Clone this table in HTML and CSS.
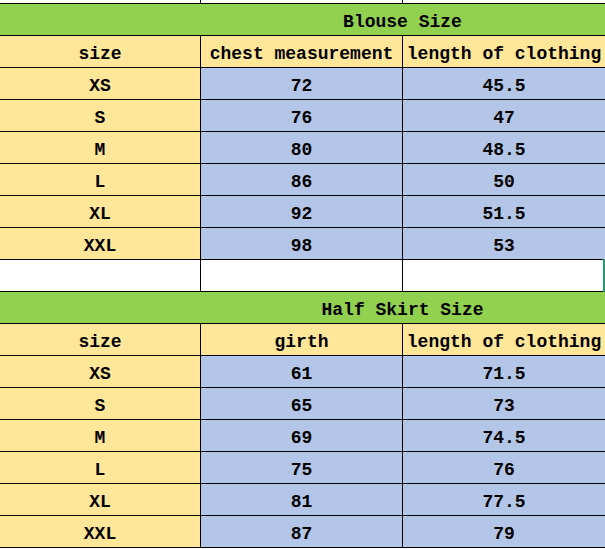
FILE: index.html
```html
<!DOCTYPE html>
<html lang="en">
<head>
<meta charset="utf-8">
<title>Size Chart</title>
<link rel="stylesheet" href="styles.css">
</head>
<body>
<div class="sheet">
  <div class="cell blank top"></div><div class="cell blank top"></div><div class="cell blank top"></div>

  <div class="cell title">Blouse Size</div>
  <div class="cell head">size</div><div class="cell head">chest measurement</div><div class="cell head">length of clothing</div>
  <div class="cell size">XS</div><div class="cell val">72</div><div class="cell val">45.5</div>
  <div class="cell size">S</div><div class="cell val">76</div><div class="cell val">47</div>
  <div class="cell size">M</div><div class="cell val">80</div><div class="cell val">48.5</div>
  <div class="cell size">L</div><div class="cell val">86</div><div class="cell val">50</div>
  <div class="cell size">XL</div><div class="cell val">92</div><div class="cell val">51.5</div>
  <div class="cell size">XXL</div><div class="cell val">98</div><div class="cell val">53</div>

  <div class="cell blank"></div><div class="cell blank"></div><div class="cell blank selected"></div>

  <div class="cell title">Half Skirt Size</div>
  <div class="cell head">size</div><div class="cell head">girth</div><div class="cell head">length of clothing</div>
  <div class="cell size">XS</div><div class="cell val">61</div><div class="cell val">71.5</div>
  <div class="cell size">S</div><div class="cell val">65</div><div class="cell val">73</div>
  <div class="cell size">M</div><div class="cell val">69</div><div class="cell val">74.5</div>
  <div class="cell size">L</div><div class="cell val">75</div><div class="cell val">76</div>
  <div class="cell size">XL</div><div class="cell val">81</div><div class="cell val">77.5</div>
  <div class="cell size">XXL</div><div class="cell val">87</div><div class="cell val">79</div>
</div>
</body>
</html>
```

FILE: styles.css
```css
html, body {
  margin: 0;
  padding: 0;
  background: #ffffff;
  overflow: hidden;
}

.sheet {
  width: 605px;
  display: grid;
  grid-template-columns: 200px 201px 202px;
  grid-template-rows: 3px repeat(17, 31px);
  gap: 1px;
  background: #000000;
  border-bottom: 1px solid #000000;
  font-family: "Liberation Mono", "DejaVu Sans Mono", monospace;
  font-size: 18px;
  font-weight: bold;
  color: #000000;
}

.cell {
  box-sizing: border-box;
  padding-top: 5px;
  line-height: 26px;
  text-align: center;
  white-space: nowrap;
  overflow: hidden;
}

.top {
  padding: 0;
}

.blank {
  background: #ffffff;
}

.title {
  grid-column: 1 / -1;
  padding-left: 200px;
  background: #92d050;
}

.head,
.size {
  background: #ffe699;
}

.val {
  background: #b4c6e7;
}

.selected {
  position: relative;
  overflow: visible;
}

.selected::after {
  content: "";
  position: absolute;
  top: -1px;
  bottom: -1px;
  right: 0;
  width: 2px;
  background: #1f9a6a;
}
```
